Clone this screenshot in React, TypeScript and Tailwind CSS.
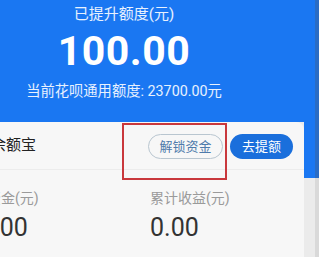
import React from "react";

const font = "font-['Roboto','Noto_Sans_CJK_SC',sans-serif]";

export default function App() {
  return (
    <div className={`relative flex w-[319px] h-[257px] overflow-hidden bg-[#ebebeb] ${font}`}>
      {/* Main column */}
      <div className="flex flex-col w-[315px]">
        {/* Blue header */}
        <div className="h-[122px] bg-[#1a77f2] flex flex-col">
          <div className="w-[248px] flex flex-col items-center">
            <div className="mt-[3px] text-[15px] leading-[22px] text-white/90">已提升额度(元)</div>
            <div className="mt-[5px] text-[41px] leading-[42px] font-bold text-white tracking-[0.5px]">100.00</div>
            <div className="mt-[9px] text-[14.3px] leading-[20px] text-white/90">当前花呗通用额度: 23700.00元</div>
          </div>
        </div>

        {/* Card row */}
        <div className="flex flex-1">
          <div className="w-[304px] bg-[#f7f7f7] rounded-tr-[8px] flex flex-col">
            {/* Card header */}
            <div className="h-[48px] flex items-center border-b border-[#ececec]">
              <span className="ml-[-9px] text-[15px] text-[#222]">余额宝</span>
              <div className="ml-auto flex items-center gap-[7px] pr-[11px] pt-[2px]">
                <button className="h-[25px] w-[75px] rounded-full border border-[#b9c6d0] text-[13px] text-[#4f7bab] bg-[#f7f7f7]">
                  解锁资金
                </button>
                <button className="h-[25px] w-[63px] rounded-full bg-[#1a6fdc] text-[13px] text-white">
                  去提额
                </button>
              </div>
            </div>

            {/* Stats */}
            <div className="flex pt-[18px]">
              <div className="w-[150px] flex flex-col">
                <span className="ml-[-13px] text-[14px] leading-[20px] text-[#9a9a9a]">资金(元)</span>
                <span className="ml-[-21px] mt-[6px] text-[25px] leading-[28px] text-[#333]">0.00</span>
              </div>
              <div className="flex flex-col">
                <span className="text-[14px] leading-[20px] text-[#9a9a9a]">累计收益(元)</span>
                <span className="mt-[6px] text-[25px] leading-[28px] text-[#333]">0.00</span>
              </div>
            </div>
          </div>

          {/* Right gutter */}
          <div className="w-[11px] flex flex-col">
            <div className="h-[56px] bg-[#1a77f2]" />
            <div className="flex-1 bg-[#ebebeb]" />
          </div>
        </div>
      </div>

      {/* Edge strip */}
      <div className="w-[4px] flex flex-col">
        <div className="h-[178px] bg-[#2a6cc4]" />
        <div className="flex-1 bg-[#d9d9d9]" />
      </div>

      {/* Highlight box */}
      <div className="absolute left-[122px] top-[123px] w-[105px] h-[57px] border-2 border-[#c9383c]" />
    </div>
  );
}
